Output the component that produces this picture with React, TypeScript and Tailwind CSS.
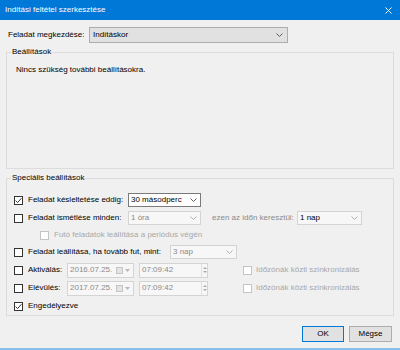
import type { ReactNode } from 'react'

function Chevron({ color = '#606060' }: { color?: string }) {
  return (
    <svg width="7" height="4" viewBox="0 0 7 4" className="shrink-0">
      <path d="M0.5 0.5 L3.5 3.5 L6.5 0.5" fill="none" stroke={color} strokeWidth="1" />
    </svg>
  )
}

function Checkbox({ checked = false, disabled = false }: { checked?: boolean; disabled?: boolean }) {
  return (
    <span className={`w-[9px] h-[9px] shrink-0 border flex items-center justify-center bg-white ${disabled ? 'border-[#c4c4c4]' : 'border-[#333333]'}`}>
      {checked && (
        <svg width="7" height="7" viewBox="0 0 7 7">
          <path d="M0.6 3.6 L2.6 5.6 L6.4 1.2" fill="none" stroke="#222" strokeWidth="0.9" />
        </svg>
      )}
    </span>
  )
}

function Combo({ value, w, disabled = false, dark = false }: { value: string; w: string; disabled?: boolean; dark?: boolean }) {
  return (
    <div className={`${w} h-[14px] shrink-0 border flex items-center pl-[2px] pr-[3px] ${disabled ? 'border-[#d4d4d4] bg-[#f7f7f7]' : 'border-[#7a7a7a] bg-white'}`}>
      <span className={`flex-1 ${disabled && !dark ? 'text-[#8a8a8a]' : 'text-black'}`}>{value}</span>
      <Chevron color={disabled ? '#b0b0b0' : '#606060'} />
    </div>
  )
}

function DateField({ value }: { value: string }) {
  return (
    <div className="w-[67px] h-[15px] shrink-0 border border-[#d4d4d4] bg-[#f7f7f7] flex items-center pl-[2px] pr-[3px]">
      <span className="flex-1 text-[#8a8a8a]">{value}</span>
      <span className="w-[7px] h-[7px] border border-[#c4c4c4] bg-[#e4e4e4] mr-[2px]" />
      <svg width="5" height="3" viewBox="0 0 5 3"><path d="M0 0 L5 0 L2.5 3 Z" fill="#b8b8b8" /></svg>
    </div>
  )
}

function TimeField({ value }: { value: string }) {
  return (
    <div className="w-[69px] h-[15px] shrink-0 border border-[#d4d4d4] bg-[#f7f7f7] flex items-center pl-[2px]">
      <span className="flex-1 text-[#8a8a8a]">{value}</span>
      <div className="w-[6px] h-full flex flex-col items-center justify-center gap-[2px] border-l border-[#e0e0e0]">
        <svg width="4" height="2" viewBox="0 0 4 2"><path d="M0 2 L2 0 L4 2 Z" fill="#a8a8a8" /></svg>
        <svg width="4" height="2" viewBox="0 0 4 2"><path d="M0 0 L4 0 L2 2 Z" fill="#a8a8a8" /></svg>
      </div>
    </div>
  )
}

function Group({ title, className, children }: { title: string; className: string; children: ReactNode }) {
  return (
    <fieldset className={`border border-[#dcdcdc] pl-[4px] ${className}`}>
      <legend className="px-[1px] leading-[10px]">{title}</legend>
      {children}
    </fieldset>
  )
}

export default function App() {
  return (
    <div className="w-[400px] h-[350px] bg-[#f0f0f0] flex flex-col font-['Liberation_Sans',Arial,sans-serif] text-[8px] text-black whitespace-nowrap border-b-2 border-[#8cc0ea]">
      {/* Title bar */}
      <div className="h-[20px] shrink-0 bg-[#0078d7] flex items-center justify-between pl-[5px] pr-[8px] text-white">
        <span>Indítási feltétel szerkesztése</span>
        <svg width="7" height="7" viewBox="0 0 7 7">
          <path d="M0.5 0.5 L6.5 6.5 M6.5 0.5 L0.5 6.5" stroke="#fff" strokeWidth="1" />
        </svg>
      </div>

      <div className="flex-1 flex flex-col px-[6px] pt-[7px]">
        <div className="flex items-center h-[16px]">
          <span className="w-[83px] pl-[2px]">Feladat megkezdése:</span>
          <div className="w-[199px] h-[16px] border border-[#adadad] bg-[#e1e1e1] flex items-center pl-[3px] pr-[4px]">
            <span className="flex-1">Indításkor</span>
            <Chevron />
          </div>
        </div>

        <Group title="Beállítások" className="mt-[4px] h-[122px]">
          <p className="pt-[8px] pl-[5px] leading-[10px]">Nincs szükség további beállításokra.</p>
        </Group>

        <Group title="Speciális beállítások" className="mt-[4px] h-[143px]">
          <div className="flex flex-col pl-[3px] pt-[8px]">
            <div className="h-[18px] flex items-center">
              <Checkbox checked />
              <span className="ml-[5px] w-[100px]">Feladat késleltetése eddig:</span>
              <Combo value="30 másodperc" w="w-[73px]" />
            </div>
            <div className="h-[18px] flex items-center">
              <Checkbox />
              <span className="ml-[5px] w-[100px]">Feladat ismétlése minden:</span>
              <Combo value="1 óra" w="w-[73px]" disabled />
              <span className="ml-[11px] w-[85px] text-[#8a8a8a]">ezen az időn keresztül:</span>
              <Combo value="1 nap" w="w-[65px]" disabled dark />
            </div>
            <div className="h-[16px] flex items-center pl-[26px]">
              <Checkbox disabled />
              <span className="ml-[5px] text-[#a8a8a8]">Futó feladatok leállítása a periódus végén</span>
            </div>
            <div className="h-[18px] flex items-center">
              <Checkbox />
              <span className="ml-[5px] w-[142px]">Feladat leállítása, ha tovább fut, mint:</span>
              <Combo value="3 nap" w="w-[67px]" disabled />
            </div>
            {[
              ['Aktiválás:', '2016.07.25.'],
              ['Elévülés:', '2017.07.25.'],
            ].map(([label, date]) => (
              <div key={label} className="h-[18px] flex items-center">
                <Checkbox />
                <span className="ml-[5px] w-[39px]">{label}</span>
                <DateField value={date} />
                <span className="w-[5px]" />
                <TimeField value="07:09:42" />
                <span className="w-[35px]" />
                <Checkbox disabled />
                <span className="ml-[4px] text-[#a8a8a8]">Időzónák közti szinkronizálás</span>
              </div>
            ))}
            <div className="h-[18px] flex items-center">
              <Checkbox checked />
              <span className="ml-[5px]">Engedélyezve</span>
            </div>
          </div>
        </Group>

        <div className="flex justify-end gap-[5px] mt-[10px] pr-[2px]">
          <button className="w-[42px] h-[16px] border border-[#0078d7] bg-[#e1e1e1]">OK</button>
          <button className="w-[43px] h-[16px] border border-[#adadad] bg-[#e1e1e1]">Mégse</button>
        </div>
      </div>
    </div>
  )
}
